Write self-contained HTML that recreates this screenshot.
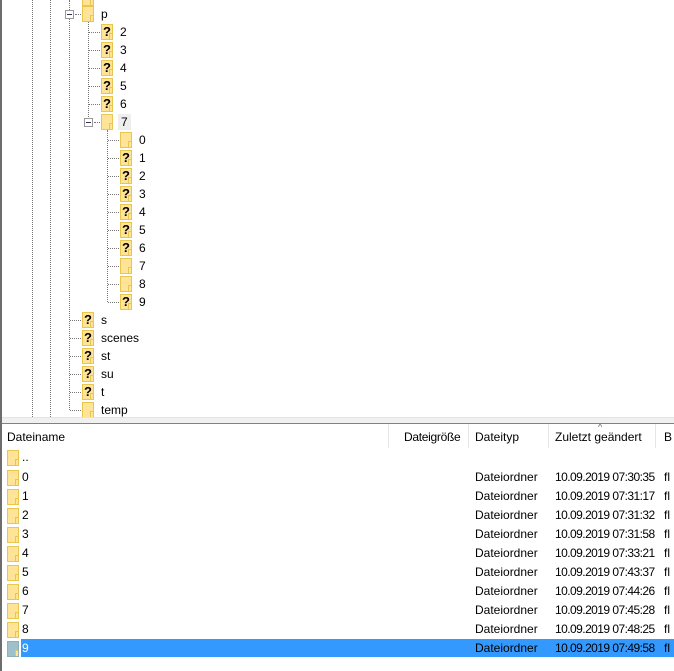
<!DOCTYPE html>
<html><head><meta charset="utf-8"><style>
body{margin:0;width:674px;height:671px;overflow:hidden;background:#fff;font-family:"Liberation Sans",sans-serif;font-size:12px;color:#000;position:relative}
.a{position:absolute}
.f{position:absolute;width:12px;height:16px;background:#ffe396;border:1px solid #e9c650;box-sizing:border-box}
.f::after{content:"";position:absolute;right:0;bottom:0;width:2px;height:5px;border-left:1px solid #e9c650;border-top:1px solid #e9c650;background:#ffe396}
.q{font-weight:bold;font-size:13px;line-height:14px;text-align:center;color:#000}
.t{position:absolute;line-height:14px;font-size:12px}
.vl{position:absolute;width:0;border-left:1px dotted #777}
.hl{position:absolute;height:0;border-top:1px dotted #777}
.bx{position:absolute;width:9px;height:9px;border:1px solid #999;background:#fff;box-sizing:border-box}
.bx::after{content:"";position:absolute;left:1px;top:3px;width:5px;height:1px;background:#335}
.r{position:absolute;left:0;width:674px;height:19px}
.r .f{left:7px;top:2px}
.r span{position:absolute;line-height:19px}
.d{letter-spacing:-0.55px}
.sep{position:absolute;top:424px;height:24px;border-left:1px solid #e5e5e5}
</style></head><body>
<div class="a" style="left:0;top:0;width:2px;height:671px;background:#6d6d6d"></div>
<div class="vl" style="left:32px;top:0;height:417px"></div>
<div class="vl" style="left:50px;top:0;height:417px"></div>
<div class="vl" style="left:69px;top:0;height:410px"></div>
<div class="vl" style="left:88px;top:20px;height:97px"></div>
<div class="vl" style="left:107px;top:130px;height:172px"></div>
<div class="bx" style="left:65px;top:10px"></div>
<div class="hl" style="left:75px;top:14px;width:6px"></div>
<div class="bx" style="left:84px;top:118px"></div>
<div class="hl" style="left:94px;top:122px;width:6px"></div>
<div class="hl" style="left:89px;top:32px;width:11px"></div>
<div class="hl" style="left:89px;top:50px;width:11px"></div>
<div class="hl" style="left:89px;top:68px;width:11px"></div>
<div class="hl" style="left:89px;top:86px;width:11px"></div>
<div class="hl" style="left:89px;top:104px;width:11px"></div>
<div class="hl" style="left:108px;top:140px;width:11px"></div>
<div class="hl" style="left:108px;top:158px;width:11px"></div>
<div class="hl" style="left:108px;top:176px;width:11px"></div>
<div class="hl" style="left:108px;top:194px;width:11px"></div>
<div class="hl" style="left:108px;top:212px;width:11px"></div>
<div class="hl" style="left:108px;top:230px;width:11px"></div>
<div class="hl" style="left:108px;top:248px;width:11px"></div>
<div class="hl" style="left:108px;top:266px;width:11px"></div>
<div class="hl" style="left:108px;top:284px;width:11px"></div>
<div class="hl" style="left:108px;top:302px;width:11px"></div>
<div class="hl" style="left:70px;top:320px;width:11px"></div>
<div class="hl" style="left:70px;top:338px;width:11px"></div>
<div class="hl" style="left:70px;top:356px;width:11px"></div>
<div class="hl" style="left:70px;top:374px;width:11px"></div>
<div class="hl" style="left:70px;top:392px;width:11px"></div>
<div class="hl" style="left:70px;top:410px;width:11px"></div>
<div class="f" style="left:82px;top:-10px"></div>
<div class="f" style="left:82px;top:6px"></div><div class="t" style="left:101px;top:7px">p</div>
<div class="f q" style="left:101px;top:24px">?</div><div class="t" style="left:120px;top:25px">2</div>
<div class="f q" style="left:101px;top:42px">?</div><div class="t" style="left:120px;top:43px">3</div>
<div class="f q" style="left:101px;top:60px">?</div><div class="t" style="left:120px;top:61px">4</div>
<div class="f q" style="left:101px;top:78px">?</div><div class="t" style="left:120px;top:79px">5</div>
<div class="f q" style="left:101px;top:96px">?</div><div class="t" style="left:120px;top:97px">6</div>
<div class="f" style="left:101px;top:114px"></div><div class="t" style="left:118px;top:114px;background:#eee;padding:0 3px;height:16px;line-height:16px">7</div>
<div class="f" style="left:120px;top:132px"></div><div class="t" style="left:139px;top:133px">0</div>
<div class="f q" style="left:120px;top:150px">?</div><div class="t" style="left:139px;top:151px">1</div>
<div class="f q" style="left:120px;top:168px">?</div><div class="t" style="left:139px;top:169px">2</div>
<div class="f q" style="left:120px;top:186px">?</div><div class="t" style="left:139px;top:187px">3</div>
<div class="f q" style="left:120px;top:204px">?</div><div class="t" style="left:139px;top:205px">4</div>
<div class="f q" style="left:120px;top:222px">?</div><div class="t" style="left:139px;top:223px">5</div>
<div class="f q" style="left:120px;top:240px">?</div><div class="t" style="left:139px;top:241px">6</div>
<div class="f" style="left:120px;top:258px"></div><div class="t" style="left:139px;top:259px">7</div>
<div class="f" style="left:120px;top:276px"></div><div class="t" style="left:139px;top:277px">8</div>
<div class="f q" style="left:120px;top:294px">?</div><div class="t" style="left:139px;top:295px">9</div>
<div class="f q" style="left:82px;top:312px">?</div><div class="t" style="left:101px;top:313px">s</div>
<div class="f q" style="left:82px;top:330px">?</div><div class="t" style="left:101px;top:331px">scenes</div>
<div class="f q" style="left:82px;top:348px">?</div><div class="t" style="left:101px;top:349px">st</div>
<div class="f q" style="left:82px;top:366px">?</div><div class="t" style="left:101px;top:367px">su</div>
<div class="f q" style="left:82px;top:384px">?</div><div class="t" style="left:101px;top:385px">t</div>
<div class="f" style="left:82px;top:402px"></div><div class="t" style="left:101px;top:403px">temp</div>
<div class="a" style="left:2px;top:417px;width:672px;height:6px;background:#f0f0f0;border-top:1px solid #e3e3e3"></div>
<div class="a" style="left:2px;top:423px;width:672px;height:1px;background:#828282"></div>
<div class="sep" style="left:388px"></div>
<div class="sep" style="left:468px"></div>
<div class="sep" style="left:548px"></div>
<div class="sep" style="left:655px"></div>
<div class="t" style="left:7px;top:430px">Dateiname</div>
<div class="t" style="left:404px;top:430px;letter-spacing:-0.3px">Dateigröße</div>
<div class="t" style="left:475px;top:430px">Dateityp</div>
<div class="t" style="left:555px;top:430px">Zuletzt geändert</div>
<div class="t" style="left:664px;top:430px">B</div>
<div class="t" style="left:598px;top:420px;font-size:9px;color:#666">^</div>
<div class="r" style="top:448px"><div class="f"></div><span style="left:22px">..</span></div>
<div class="r" style="top:468px"><div class="f"></div><span style="left:22px">0</span><span style="left:475px">Dateiordner</span><span class="d" style="left:555px">10.09.2019 07:30:35</span><span style="left:664px">fl</span></div>
<div class="r" style="top:487px"><div class="f"></div><span style="left:22px">1</span><span style="left:475px">Dateiordner</span><span class="d" style="left:555px">10.09.2019 07:31:17</span><span style="left:664px">fl</span></div>
<div class="r" style="top:506px"><div class="f"></div><span style="left:22px">2</span><span style="left:475px">Dateiordner</span><span class="d" style="left:555px">10.09.2019 07:31:32</span><span style="left:664px">fl</span></div>
<div class="r" style="top:525px"><div class="f"></div><span style="left:22px">3</span><span style="left:475px">Dateiordner</span><span class="d" style="left:555px">10.09.2019 07:31:58</span><span style="left:664px">fl</span></div>
<div class="r" style="top:544px"><div class="f"></div><span style="left:22px">4</span><span style="left:475px">Dateiordner</span><span class="d" style="left:555px">10.09.2019 07:33:21</span><span style="left:664px">fl</span></div>
<div class="r" style="top:563px"><div class="f"></div><span style="left:22px">5</span><span style="left:475px">Dateiordner</span><span class="d" style="left:555px">10.09.2019 07:43:37</span><span style="left:664px">fl</span></div>
<div class="r" style="top:582px"><div class="f"></div><span style="left:22px">6</span><span style="left:475px">Dateiordner</span><span class="d" style="left:555px">10.09.2019 07:44:26</span><span style="left:664px">fl</span></div>
<div class="r" style="top:601px"><div class="f"></div><span style="left:22px">7</span><span style="left:475px">Dateiordner</span><span class="d" style="left:555px">10.09.2019 07:45:28</span><span style="left:664px">fl</span></div>
<div class="r" style="top:620px"><div class="f"></div><span style="left:22px">8</span><span style="left:475px">Dateiordner</span><span class="d" style="left:555px">10.09.2019 07:48:25</span><span style="left:664px">fl</span></div>
<div class="r" style="top:639px"><div class="a" style="left:21px;top:0;width:653px;height:18px;background:#3399ff"></div><div class="f" style="background:#9dc0cc;border-color:#8fb0b8"></div><span style="left:22px;color:#fff">9</span><span style="left:475px">Dateiordner</span><span class="d" style="left:555px">10.09.2019 07:49:58</span><span style="left:664px">fl</span></div>
</body></html>
